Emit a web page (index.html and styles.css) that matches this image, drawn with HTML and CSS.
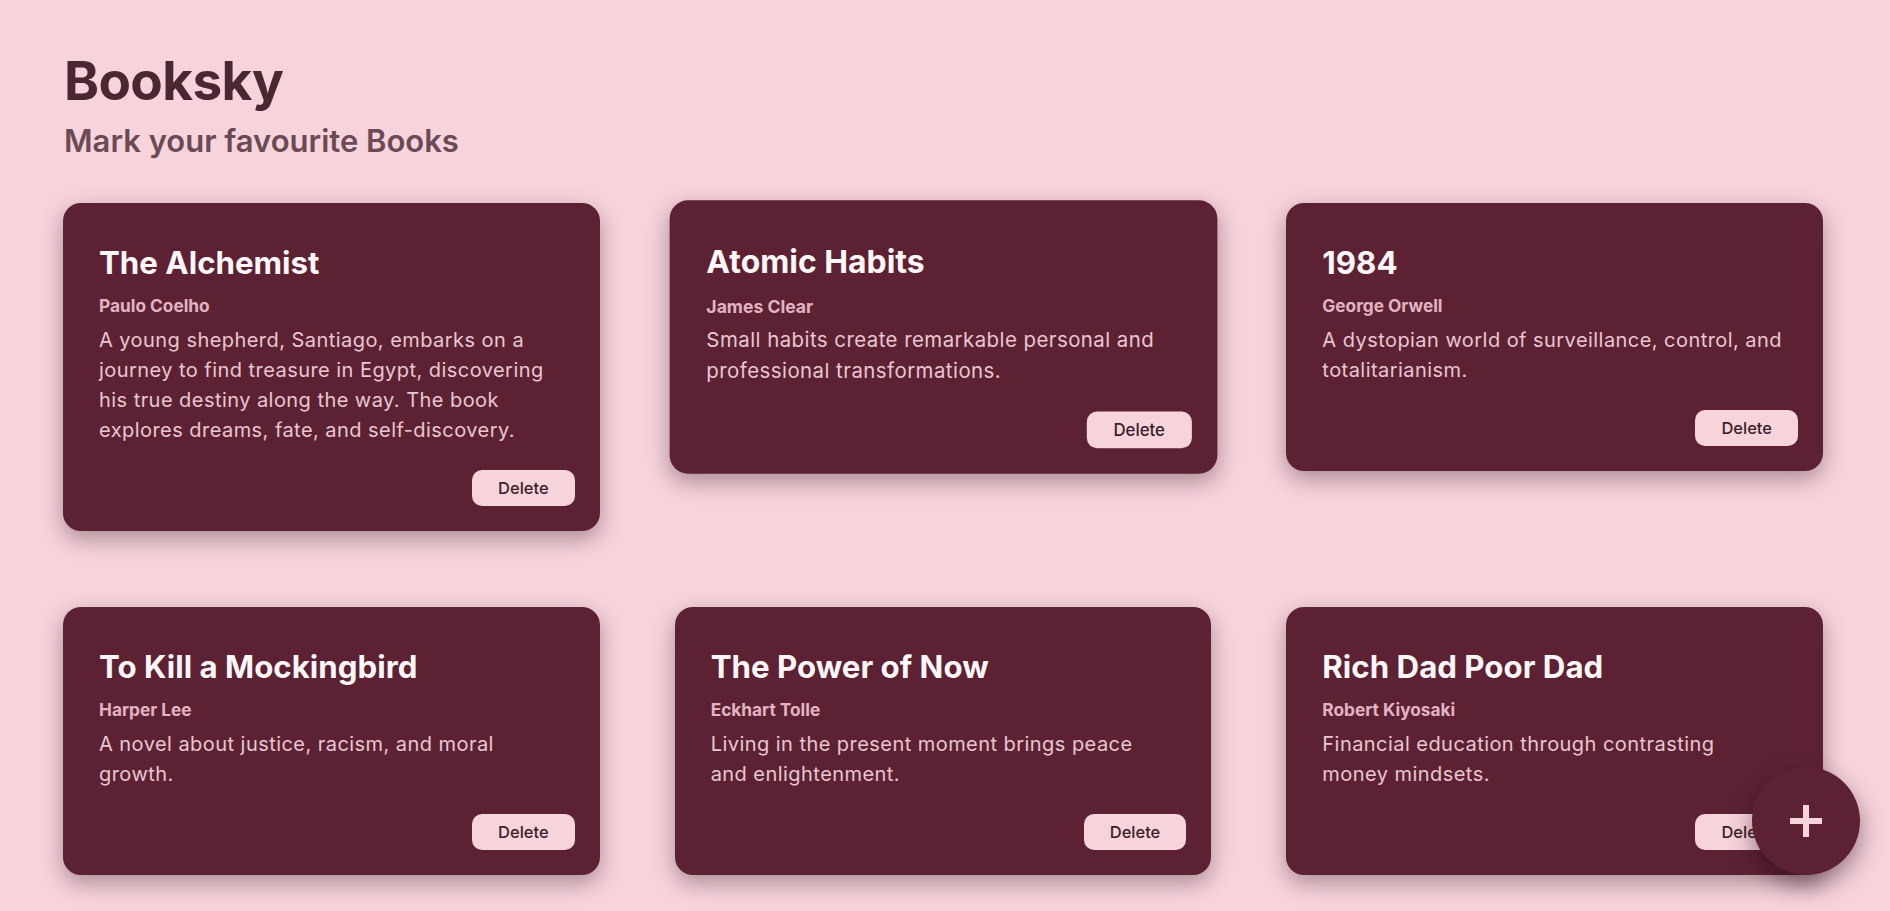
FILE: index.html
```html
<!DOCTYPE html>
<html lang="en">
<head>
<meta charset="utf-8">
<title>Booksky</title>
<link rel="stylesheet" href="styles.css">
</head>
<body>
<main class="page">
  <header class="header">
    <h1 class="brand">Booksky</h1>
    <p class="tagline">Mark your favourite Books</p>
  </header>
  <section class="grid">
    <article class="card">
      <h2 class="card-title">The Alchemist</h2>
      <p class="card-author">Paulo Coelho</p>
      <p class="card-desc">A young shepherd, Santiago, embarks on a<br>journey to find treasure in Egypt, discovering<br>his true destiny along the way. The book<br>explores dreams, fate, and self-discovery.</p>
      <button class="btn-delete">Delete</button>
    </article>
    <article class="card is-hovered">
      <h2 class="card-title">Atomic Habits</h2>
      <p class="card-author">James Clear</p>
      <p class="card-desc">Small habits create remarkable personal and<br>professional transformations.</p>
      <button class="btn-delete">Delete</button>
    </article>
    <article class="card">
      <h2 class="card-title">1984</h2>
      <p class="card-author">George Orwell</p>
      <p class="card-desc">A dystopian world of surveillance, control, and<br>totalitarianism.</p>
      <button class="btn-delete">Delete</button>
    </article>
    <article class="card">
      <h2 class="card-title">To Kill a Mockingbird</h2>
      <p class="card-author">Harper Lee</p>
      <p class="card-desc">A novel about justice, racism, and moral<br>growth.</p>
      <button class="btn-delete">Delete</button>
    </article>
    <article class="card">
      <h2 class="card-title">The Power of Now</h2>
      <p class="card-author">Eckhart Tolle</p>
      <p class="card-desc">Living in the present moment brings peace<br>and enlightenment.</p>
      <button class="btn-delete">Delete</button>
    </article>
    <article class="card">
      <h2 class="card-title">Rich Dad Poor Dad</h2>
      <p class="card-author">Robert Kiyosaki</p>
      <p class="card-desc">Financial education through contrasting<br>money mindsets.</p>
      <button class="btn-delete">Delete</button>
    </article>
  </section>
</main>
<button class="fab" aria-label="Add book">
  <svg width="32" height="32" viewBox="0 0 32 32" aria-hidden="true">
    <rect x="13" y="0" width="6" height="32" fill="#f7d4dc"/>
    <rect x="0" y="13" width="32" height="6" fill="#f7d4dc"/>
  </svg>
</button>
</body>
</html>
```

FILE: styles.css
```css
* { box-sizing: border-box; }

html, body {
  margin: 0;
  padding: 0;
  background: #f7d4dc;
}

body {
  font-family: "Inter", "Noto Sans", sans-serif;
  color: #4a2832;
}

.page {
  padding: 50px 67px 40px 63px;
}

.header {
  padding-left: 1px;
}

.brand {
  margin: 0;
  font-size: 53px;
  line-height: 1.2;
  font-weight: 700;
  color: #4a2832;
  letter-spacing: -0.6px;
}

.tagline {
  margin: 8px 0 0;
  font-size: 31px;
  line-height: 1.2;
  font-weight: 600;
  color: #6b4a56;
}

.grid {
  margin-top: 44px;
  display: grid;
  grid-template-columns: repeat(3, 1fr);
  gap: 76px 75px;
  align-items: start;
}

.card {
  background: #5c2234;
  border-radius: 18px;
  padding: 42px 25px 25px 36px;
  display: flex;
  flex-direction: column;
  box-shadow: 0 8px 22px rgba(40, 10, 20, 0.36);
}

.card.is-hovered {
  transform: scale(1.02);
}

.card-title {
  margin: 0;
  font-size: 31.25px;
  line-height: 1.2;
  font-weight: 700;
  color: #fff6f8;
}

.card-author {
  margin: 14px 0 0;
  font-size: 17.25px;
  line-height: 1.2;
  font-weight: 700;
  color: #e2b4c2;
}

.card-desc {
  margin: 8px 0 0;
  font-size: 20px;
  line-height: 30px;
  font-weight: 400;
  letter-spacing: 0.45px;
  color: #e9c6d0;
}

.btn-delete {
  align-self: flex-end;
  margin-top: 25px;
  height: 36px;
  padding: 0 26px;
  border: none;
  border-radius: 10px;
  background: #f7d4dc;
  color: #3a1e28;
  font-family: inherit;
  font-size: 16.5px;
  font-weight: 500;
  cursor: pointer;
}

.fab {
  position: fixed;
  right: 30px;
  bottom: 36px;
  width: 108px;
  height: 108px;
  border: none;
  border-radius: 50%;
  background: #5c2234;
  display: flex;
  align-items: center;
  justify-content: center;
  box-shadow: 0 10px 24px rgba(30, 5, 15, 0.45);
  cursor: pointer;
}
```
